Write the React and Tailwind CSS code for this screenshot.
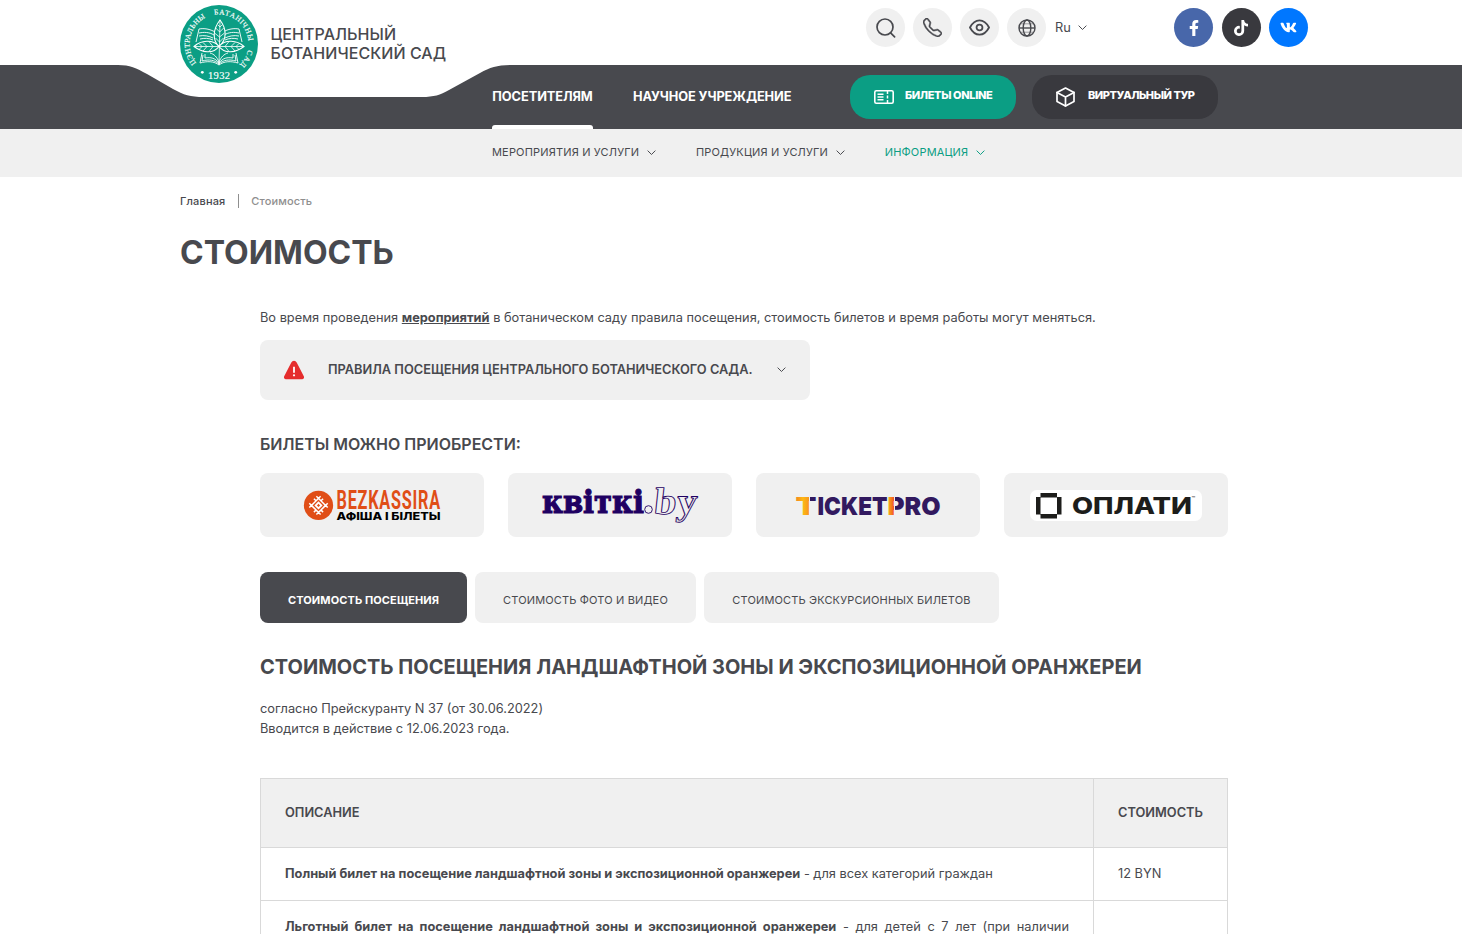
import React from 'react';
import { FaFacebookF, FaTiktok, FaVk } from 'react-icons/fa';
import { BsTelephone } from 'react-icons/bs';

const Chevron = ({ className = 'w-[9px]' }) => (
  <svg className={className} viewBox="0 0 10 6" fill="none" stroke="currentColor" strokeWidth="1.1" strokeLinecap="round" strokeLinejoin="round">
    <path d="M1 1l4 4 4-4" />
  </svg>
);

const Emblem = () => (
  <svg className="w-[78px] h-[78px] shrink-0" viewBox="0 0 78 78">
    <defs>
      <path id="ring" d="M16.4 57.96 A29.5 29.5 0 1 1 61.6 57.96" />
    </defs>
    <circle cx="39" cy="39" r="39" fill="#0b9e84" />
    <g fill="#fff" stroke="#fff" strokeWidth=".15" fontFamily="Liberation Serif, serif" fontSize="7.5">
      <text textLength="53"><textPath href="#ring">ЦЭНТРАЛЬНЫ</textPath></text>
      <text textLength="48"><textPath href="#ring" startOffset="62">БАТАНІЧНЫ</textPath></text>
      <text transform="translate(39 39) rotate(106)" x="-2.5" y="-29.5">С</text>
      <text transform="translate(39 39) rotate(118)" x="-2.5" y="-29.5">А</text>
      <text transform="translate(39 39) rotate(130)" x="-2.5" y="-29.5">Д</text>
      <text x="39" y="73.5" textAnchor="middle" fontSize="10.5" textLength="22">1932</text>
    </g>
    <circle cx="22.3" cy="67.3" r="1.4" fill="#fff" />
    <circle cx="55.7" cy="67.3" r="1.4" fill="#fff" />
    <g fill="none" stroke="#fff" strokeWidth=".9" strokeLinejoin="round">
      <path d="M35 27c-5-3-11-4-16-3l-3 13M34 30c-5-3-10-3-15-2M33 33c-4-2-9-3-14-2M33 35c-4-2-9-2-13-1" />
      <path d="M43 27c5-3 11-4 16-3l3 13M44 30c5-3 10-3 15-2M45 33c4-2 9-3 14-2M45 35c4-2 9-2 13-1" />
      <path d="M22 48l-2 10c7-2 14-2 19 2c5-4 12-4 19-2l-2-10M23 50l-1 6c7-2 13-1 17 3c4-4 10-5 17-3l-1-6M25 49v4c6-1 10 0 14 5c4-5 8-6 14-5v-4M30 48c4 1 7 4 9 9c2-5 5-8 9-9" />
    </g>
    <g fill="#0b9e84" stroke="#fff" strokeWidth="1.1">
      <path d="M39 41.5C32 35 33 24 40 15c6 8 8 19-1 26.5z" />
      <path d="M39 41.5C33 34 21 35 14 41.5c8 6 19 8 25 0z" />
      <path d="M39 41.5C45 34 57 35 64 41.5c-8 6-19 8-25 0z" />
    </g>
    <g fill="none" stroke="#fff" strokeWidth=".8">
      <path d="M40 15l-1 45M39.5 37l4-4M39.5 37l-4-4M39.5 32l5-4M39.5 32l-5-4M39.7 27l4-4M39.7 27l-4-4M40 22l2-2M40 22l-2-2" />
      <path d="M14 41.5h50M33 41.5l-4-5M33 41.5l-4 5M27 41.5l-4-4M27 41.5l-4 4.5M22 41.5l-3-3M22 41.5l-3 3M45 41.5l4-5M45 41.5l4 5M51 41.5l4-4M51 41.5l4 4.5M56 41.5l3-3M56 41.5l3 3" />
    </g>
  </svg>
);

const SearchIcon = () => (
  <svg className="size-5" viewBox="0 0 20 20" fill="none" stroke="currentColor" strokeWidth="1.7">
    <circle cx="9" cy="9" r="8" />
    <path d="M14.6 14.8l4 4" strokeLinecap="round" />
  </svg>
);

const EyeIcon = () => (
  <svg className="w-[21px] h-[17px]" viewBox="0 0 20 16" fill="none" stroke="currentColor" strokeWidth="1.7">
    <path d="M.9 8C3 4 6.2 1.2 10 1.2S17 4 19.1 8C17 12 13.8 14.8 10 14.8S3 12 .9 8z" strokeLinejoin="round" />
    <circle cx="10" cy="8" r="2.8" />
  </svg>
);

const GlobeIcon = () => (
  <svg className="size-[18px]" viewBox="0 0 18 18" fill="none" stroke="currentColor" strokeWidth="1.4">
    <circle cx="9" cy="9" r="8" />
    <ellipse cx="9" cy="9" rx="3.8" ry="8" />
    <path d="M1 9h16" />
    <path d="M2.5 4.8h13M2.5 13.2h13" strokeWidth=".5" />
  </svg>
);

const TicketIcon = () => (
  <svg className="w-5 h-[14px]" viewBox="0 0 20 14" fill="none" stroke="currentColor" strokeWidth="1.6">
    <rect x=".8" y=".8" width="18.4" height="12.4" rx="1.5" />
    <path d="M3.5 4.2h6M3.5 7h6M3.5 9.8h6" strokeWidth="1.4" />
    <path d="M13.5 1v3M13.5 5.5v3M13.5 10v3" strokeWidth="1.5" />
  </svg>
);

const CubeIcon = () => (
  <svg className="w-[19px] h-5" viewBox="0 0 19 20" fill="none" stroke="currentColor" strokeWidth="1.7" strokeLinejoin="round" strokeLinecap="round">
    <path d="M9.5 1L18 5.5v9L9.5 19 1 14.5v-9z" />
    <path d="M1 5.5l8.5 4.5L18 5.5M9.5 10v9" />
  </svg>
);

const WarningIcon = () => (
  <svg className="w-5 h-5" viewBox="0 0 20 20">
    <path d="M7.3 2.4a3.1 3.1 0 0 1 5.4 0l7.1 13.8a2 2 0 0 1-1.8 3H2a2 2 0 0 1-1.8-3z" fill="#e52d2d" />
    <path d="M10 6.8v6" stroke="#fff" strokeWidth="1.8" />
    <circle cx="10" cy="15.3" r="1.1" fill="#fff" />
  </svg>
);

const BezkassiraLogo = () => (
  <svg className="w-[224px] h-16" viewBox="0 0 224 64">
    <circle cx="58.5" cy="32.4" r="14.6" fill="#e04e17" />
    <g transform="translate(58.5 32.4) rotate(45)" fill="none" stroke="#fff" strokeWidth="1.8">
      <rect x="-2" y="-2" width="4" height="4" />
      <path d="M-5 -8V5H8M5 8V-5H-8M-8 -1.5h3M8 1.5H5M-1.5 -8v3M1.5 8V5M-8 5h3v3M8 -5H5v-3" strokeWidth="1.5" />
    </g>
    <text x="76.5" y="36" fill="#e04e17" fontFamily="Roboto, sans-serif" fontWeight="700" fontSize="25" letterSpacing="1.2" textLength="104.5" lengthAdjust="spacingAndGlyphs">BEZKASSIRA</text>
    <text x="76.5" y="47" fill="#000" fontFamily="Inter, sans-serif" fontWeight="800" fontSize="10.5" textLength="104" lengthAdjust="spacingAndGlyphs">АФІША І БІЛЕТЫ</text>
  </svg>
);

const KvitkiLogo = () => (
  <svg className="w-[224px] h-16" viewBox="0 0 224 64" fill="none" stroke="#1f0062" strokeWidth=".9">
    <text x="34" y="40" fill="#1f0062" strokeWidth="1.1" fontFamily="DejaVu Serif, serif" fontWeight="700" fontSize="31" textLength="102" lengthAdjust="spacingAndGlyphs">квіткі</text>
    <circle cx="140.5" cy="36.5" r="3.8" />
    <text transform="translate(145 40.5) skewX(-6)" x="0" y="0" fontFamily="Liberation Serif, serif" fontWeight="700" fontSize="38" textLength="43" lengthAdjust="spacingAndGlyphs">by</text>
  </svg>
);

const TicketproLogo = () => (
  <svg className="w-[224px] h-16" viewBox="0 0 224 64" fontFamily="Inter, sans-serif" fontWeight="900" fontSize="25">
    <defs>
      <linearGradient id="tFill">
        <stop offset="0" stopColor="#f58220" />
        <stop offset=".35" stopColor="#fdb913" />
        <stop offset=".66" stopColor="#f7941d" />
        <stop offset=".66" stopColor="#f0f0f0" />
        <stop offset=".7" stopColor="#f0f0f0" />
        <stop offset=".7" stopColor="#32195f" />
      </linearGradient>
      <linearGradient id="pFill">
        <stop offset="0" stopColor="#fdb913" />
        <stop offset=".36" stopColor="#f15a24" />
        <stop offset=".36" stopColor="#f0f0f0" />
        <stop offset=".42" stopColor="#f0f0f0" />
        <stop offset=".42" stopColor="#32195f" />
      </linearGradient>
    </defs>
    <text x="39.5" y="41.5" fill="url(#tFill)" textLength="21" lengthAdjust="spacingAndGlyphs">T</text>
    <text x="61.5" y="41.5" fill="#32195f" textLength="70" lengthAdjust="spacingAndGlyphs">ICKET</text>
    <text x="131.5" y="41.5" fill="url(#pFill)" textLength="17" lengthAdjust="spacingAndGlyphs">P</text>
    <text x="148.5" y="41.5" fill="#32195f" textLength="36" lengthAdjust="spacingAndGlyphs">RO</text>
  </svg>
);

const OplatiLogo = () => (
  <svg className="w-[224px] h-16" viewBox="0 0 224 64">
    <rect x="26" y="17" width="172" height="31" rx="7" fill="#fff" />
    <g fill="#1d1d1b">
      <path d="M36.5 20h16.5v4.5H36.5zM36.5 41h16.5v4.5H36.5zM32 24h4.5v17.5H32zM53 24h4.5v17.5H53z" />
      <text x="68" y="41" fontFamily="Inter, sans-serif" fontWeight="800" fontSize="23.4" textLength="120" lengthAdjust="spacingAndGlyphs">ОПЛАТИ</text>
      <text x="187.5" y="28" fontFamily="Inter, sans-serif" fontSize="6">™</text>
    </g>
  </svg>
);

const RoundButton = ({ children, className = 'bg-[#f0f0f0] text-[#48494e]' }) => (
  <a href="#" className={`size-[39.2px] rounded-full flex items-center justify-center ${className}`}>
    {children}
  </a>
);

const TopBar = () => (
  <div className="h-[65px] bg-white">
    <div className="relative z-10 flex items-start pl-[180px]">
      <a href="#" className="flex items-center w-[686px] pt-[5px]">
        <Emblem />
        <span className="ml-[12.5px] text-[16px] leading-[19px] font-medium tracking-[0.06px] uppercase">
          Центральный
          <br />
          Ботанический сад
        </span>
      </a>
      <div className="flex items-center gap-[7.8px] pt-2 w-[308px]">
        <RoundButton><SearchIcon /></RoundButton>
        <RoundButton><BsTelephone size={19} stroke="currentColor" strokeWidth={0.4} /></RoundButton>
        <RoundButton><EyeIcon /></RoundButton>
        <RoundButton><GlobeIcon /></RoundButton>
        <span className="ml-px flex items-center gap-[7px] text-[12.8px]">
          Ru <Chevron />
        </span>
      </div>
      <div className="flex gap-[8.4px] pt-2">
        <RoundButton className="bg-[#4867aa] text-white"><FaFacebookF size={16} /></RoundButton>
        <RoundButton className="bg-[#39393e] text-white"><FaTiktok size={16} /></RoundButton>
        <RoundButton className="bg-[#0077ff] text-white"><FaVk size={17} /></RoundButton>
      </div>
    </div>
  </div>
);

const MainNav = () => (
  <div className="relative h-16 bg-[#48494e] flex pl-[492px] text-white">
    <svg className="absolute left-[118px] top-0 w-[396px] h-8" viewBox="0 0 396 32" fill="#fff">
      <path d="M0 0h396c-16 0-23 2-34 8l-31 17c-9 5-15 7-27 7H86c-14 0-20-2-31-8L29 9C18 3 12 0 0 0z" />
    </svg>
    <nav className="flex w-[358px] gap-10 text-[12.8px] leading-5 font-bold tracking-[-0.08px] uppercase">
      <a href="#" className="flex flex-col justify-between items-center w-[101px] whitespace-nowrap pt-[22px]">
        Посетителям
        <span className="h-1 w-[101px] rounded-t-[3px] bg-white" />
      </a>
      <a href="#" className="pt-[22px]">Научное учреждение</a>
    </nav>
    <div className="flex gap-4 pt-2.5 text-[11px] font-extrabold uppercase">
      <a href="#" className="h-11 w-[166px] pl-6 rounded-[20px] bg-[#0b9e84] flex items-center gap-[11px] tracking-[-0.36px]">
        <TicketIcon />
        <span className="pb-[3px]">Билеты online</span>
      </a>
      <a href="#" className="h-11 w-[186px] pl-6 rounded-[20px] bg-[#39393e] flex items-center gap-[13px] tracking-[-0.45px]">
        <CubeIcon />
        <span className="pb-[3px]">Виртуальный тур</span>
      </a>
    </div>
  </div>
);

const SubNav = () => (
  <nav className="h-12 bg-[#f0f0f0] pl-[492px] flex items-center gap-[39.7px] pb-px text-[11px] tracking-[0.17px] uppercase">
    <a href="#" className="flex items-center gap-2">Мероприятия и услуги <Chevron /></a>
    <a href="#" className="flex items-center gap-2">Продукция и услуги <Chevron /></a>
    <a href="#" className="flex items-center gap-2 text-[#0b9e84]">Информация <Chevron /></a>
  </nav>
);

const sellers = [BezkassiraLogo, KvitkiLogo, TicketproLogo, OplatiLogo];

const App = () => {
  return (
    <div className="h-[934px] overflow-hidden bg-white text-[#48494e] font-['Inter',sans-serif]">
      <TopBar />
      <MainNav />
      <SubNav />

      <div className="pl-[180px] pt-4 flex items-center text-[11px] leading-4 font-medium tracking-[0.15px]">
        <a href="#">Главная</a>
        <span className="mx-[12.4px] h-[14px] w-px bg-[#8f8f8f]" />
        <span className="text-[#8f8f8f]">Стоимость</span>
      </div>
      <h1 className="pl-[180px] mt-6 text-[32px] leading-10 font-bold uppercase">Стоимость</h1>

      <main className="ml-[260px] w-[968px] mt-[35px] text-[12.8px] leading-5">
        <p>
          Во время проведения <a href="#" className="font-bold underline">мероприятий</a> в ботаническом саду правила посещения, стоимость билетов и время работы могут меняться.
        </p>

        <div className="mt-3 h-[60px] w-[550px] px-6 rounded-lg bg-[#f0f0f0] flex items-center">
          <WarningIcon />
          <span className="ml-6 flex-1 font-semibold uppercase">Правила посещения Центрального ботанического сада.</span>
          <Chevron />
        </div>

        <h3 className="mt-[34px] text-[16px] leading-5 font-semibold uppercase">Билеты можно приобрести:</h3>
        <div className="mt-[19px] flex gap-6">
          {sellers.map((Logo, i) => (
            <a href="#" key={i} className="w-[224px] h-16 rounded-lg bg-[#f0f0f0]"><Logo /></a>
          ))}
        </div>

        <div className="mt-[35px] flex gap-2 text-[11px] tracking-[0.15px] uppercase">
          <a href="#" className="h-[51px] w-[207px] pt-[18px] text-center rounded-lg bg-[#48494e] text-white font-bold tracking-[0.1px]">Стоимость посещения</a>
          <a href="#" className="h-[51px] w-[221px] pt-[18px] text-center rounded-lg bg-[#f0f0f0]">Стоимость фото и видео</a>
          <a href="#" className="h-[51px] w-[295px] pt-[18px] text-center rounded-lg bg-[#f0f0f0]">Стоимость экскурсионных билетов</a>
        </div>

        <h2 className="mt-[30px] text-[20px] leading-7 font-bold uppercase whitespace-nowrap">Стоимость посещения ландшафтной зоны и экспозиционной оранжереи</h2>
        <p className="mt-[18px]">
          согласно Прейскуранту N 37 (от 30.06.2022)
          <br />
          Вводится в действие с 12.06.2023 года.
        </p>

        <table className="mt-[39px] w-[967px] table-fixed border-collapse">
          <colgroup>
            <col className="w-[833px]" />
            <col className="w-[134px]" />
          </colgroup>
          <thead>
            <tr className="h-[69px] bg-[#f0f0f0] text-left uppercase">
              <th className="border border-[#d9d9d9] px-6 font-semibold">Описание</th>
              <th className="border border-[#d9d9d9] px-6 font-semibold">Стоимость</th>
            </tr>
          </thead>
          <tbody className="align-top">
            <tr>
              <td className="border border-[#d9d9d9] px-6 py-4">
                <b>Полный билет на посещение ландшафтной зоны и экспозиционной оранжереи</b> - для всех категорий граждан
              </td>
              <td className="border border-[#d9d9d9] px-6 py-4">12 BYN</td>
            </tr>
            <tr>
              <td className="border border-[#d9d9d9] px-6 py-4 text-justify">
                <b>Льготный билет на посещение ландшафтной зоны и экспозиционной оранжереи</b> - для детей с 7 лет (при наличии свидетельства о рождении)
              </td>
              <td className="border border-[#d9d9d9] px-6 py-4" />
            </tr>
          </tbody>
        </table>
      </main>
    </div>
  );
};

export default App;
